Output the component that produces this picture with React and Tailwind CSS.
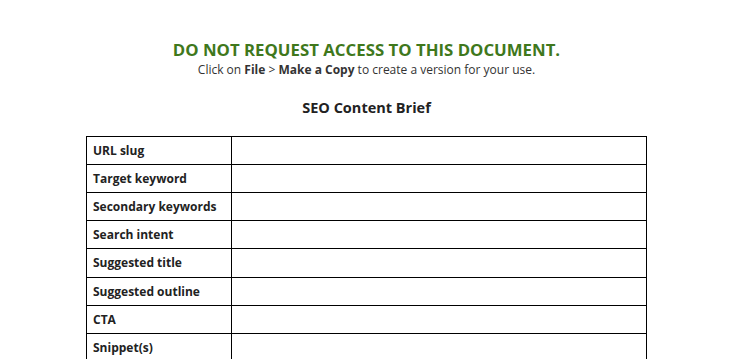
const rows = [
  { label: 'URL slug', h: 'h-[28px]' },
  { label: 'Target keyword', h: 'h-[28px]' },
  { label: 'Secondary keywords', h: 'h-[28px]' },
  { label: 'Search intent', h: 'h-[28px]' },
  { label: 'Suggested title', h: 'h-[29px]' },
  { label: 'Suggested outline', h: 'h-[28px]' },
  { label: 'CTA', h: 'h-[28px]' },
  { label: 'Snippet(s)', h: 'h-[28px]' },
];

export default function App() {
  return (
    <div className="w-[733px] h-[359px] overflow-hidden bg-white text-[#222] font-['Open_Sans',sans-serif]">
      <div className="flex flex-col items-center pt-[38px]">
        {/* Notice */}
        <h1 className="h-[24px] leading-[24px] text-[16.8px] font-bold text-[#3f781c]">
          DO NOT REQUEST ACCESS TO THIS DOCUMENT.
        </h1>
        <p className="h-[18px] leading-[18px] mt-[-1px] text-[12px] text-[#333]">
          Click on <b>File</b> &gt; <b>Make a Copy</b> to create a version for your use.
        </p>
        <h2 className="mt-[19px] h-[20px] leading-[20px] text-[14.5px] font-bold">SEO Content Brief</h2>
      </div>

      {/* Brief table */}
      <table className="mt-[18px] ml-[86px] w-[561px] border-collapse">
        <tbody>
          {rows.map(({ label, h }) => (
            <tr key={label} className={h}>
              <td className="w-[145px] border border-black px-[6px] text-[12px] font-bold leading-none align-middle">
                {label}
              </td>
              <td className="border border-black" />
            </tr>
          ))}
        </tbody>
      </table>
    </div>
  );
}
